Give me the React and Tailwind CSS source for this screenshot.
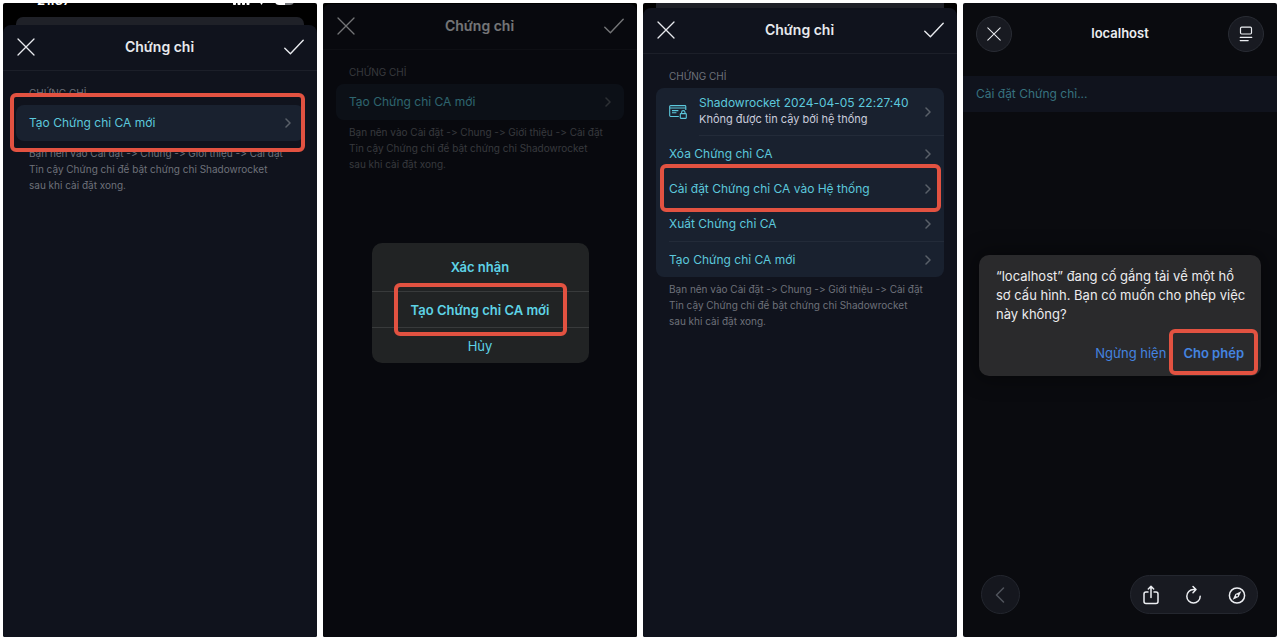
import React from "react";

const NOTE = [
  "Bạn nên vào Cài đặt -> Chung -> Giới thiệu -> Cài đặt",
  "Tin cậy Chứng chỉ để bật chứng chỉ Shadowrocket",
  "sau khi cài đặt xong.",
];

function Panel({ className = "", children }) {
  return (
    <section className={`relative flex min-w-0 flex-col overflow-hidden rounded-[2px] ${className}`}>
      {children}
    </section>
  );
}

function Highlight({ className }) {
  return (
    <span
      aria-hidden="true"
      className={`pointer-events-none absolute rounded-[6px] border-4 border-[#e25241] ${className}`}
    />
  );
}

function CloseIcon({ className = "size-[18px]" }) {
  return (
    <svg viewBox="0 0 18 18" className={className} fill="none" stroke="currentColor" strokeWidth="1.3" strokeLinecap="round">
      <path d="M1 1l16 16M17 1L1 17" />
    </svg>
  );
}

function CheckIcon() {
  return (
    <svg viewBox="0 0 20 16" className="h-4 w-5" fill="none" stroke="currentColor" strokeWidth="1.4" strokeLinecap="round" strokeLinejoin="round">
      <path d="M0.8 9.2l5.6 5.6L19.2 1.2" />
    </svg>
  );
}

function Chevron() {
  return (
    <svg viewBox="0 0 6 10" className="h-[10px] w-[6px] shrink-0 text-[#5a6069]" fill="none" stroke="currentColor" strokeWidth="1.5" strokeLinecap="round" strokeLinejoin="round">
      <path d="M1 1l4 4-4 4" />
    </svg>
  );
}

function CertificateIcon() {
  return (
    <svg viewBox="0 0 18 14" className="h-[14px] w-[18px] shrink-0" fill="none" stroke="currentColor" strokeWidth="1.1">
      <path d="M9.8 11.5H1.6a.9.9 0 0 1-.9-.9V1.5a.9.9 0 0 1 .9-.9h14.3a.9.9 0 0 1 .9.9v3.6" />
      <path d="M.7 3h16.1M3 5.600h6.400M3 7.700h4.400" />
      <rect x="11.3" y="8.6" width="6" height="4.8" rx=".6" />
      <path d="M12.6 8.6V7.3a1.7 1.7 0 0 1 3.4 0v1.3" />
    </svg>
  );
}

function SheetHeader() {
  return (
    <header className="flex h-[46px] items-center justify-between border-b border-[#1c1f29] pb-[2px] pl-[14px] pr-[13px] text-[#e8eaee]">
      <button aria-label="Đóng"><CloseIcon /></button>
      <h2 className="text-[14px] font-semibold leading-5">Chứng chỉ</h2>
      <button aria-label="Xong"><CheckIcon /></button>
    </header>
  );
}

function Row({ children, className = "" }) {
  return (
    <button className={`flex w-full items-center justify-between px-[13px] text-left text-[12px] leading-4 text-[#5cc8dc] ${className}`}>
      <span className="whitespace-nowrap">{children}</span>
      <Chevron />
    </button>
  );
}

function Sheet({ children }) {
  return (
    <div className="flex flex-1 flex-col rounded-t-[8px] bg-[#10131d]">
      <SheetHeader />
      <div className="px-[13px] pt-[14px]">
        <h3 className="mb-1 px-[13px] text-[10px] leading-4 text-[#6e717a]">CHỨNG CHỈ</h3>
        <div className="relative">{children}</div>
        <p className="mt-1 whitespace-nowrap px-[13px] text-[10px] leading-4 text-[#6e717a]">
          {NOTE.map((line) => (
            <span key={line} className="block">{line}</span>
          ))}
        </p>
      </div>
    </div>
  );
}

function CreateRow() {
  return <Row className="h-9 rounded-[8px] bg-[#19212f]">Tạo Chứng chỉ CA mới</Row>;
}

function StatusBar() {
  return (
    <div className="flex h-[5px] items-end justify-between overflow-hidden pl-[34px] pr-[22px] text-white">
      <span className="shrink-0 text-[13px] font-semibold leading-4">21:37</span>
      <svg viewBox="0 0 64 6" className="h-[6px] w-16 shrink-0" fill="currentColor">
        <rect x="2" y="-2" width="3" height="5" rx=".8" />
        <rect x="6.5" y="-3" width="3" height="6" rx=".8" />
        <rect x="11" y="-4" width="3" height="7" rx=".8" />
        <rect x="15.5" y="-5" width="3" height="8" rx=".8" />
        <path d="M28 -1h5l-2.5 4z" />
        <path d="M44 -4h10v7h-6a4 4 0 0 1-4-4z" />
        <path d="M54 -4h9v3a4 4 0 0 1-4 4h-5z" fill="#77797d" />
      </svg>
    </div>
  );
}

function FirstPanel() {
  return (
    <Panel className="bg-black">
      <StatusBar />
      <div className="mx-[13px] mt-[9px] h-2 rounded-t-[7px] bg-[#1f2128]" />
      <Sheet>
        <CreateRow />
        <Highlight className="-bottom-[11px] -left-[6px] -right-px -top-[12px]" />
      </Sheet>
    </Panel>
  );
}

function SecondPanel() {
  return (
    <Panel className="bg-black pt-px">
      <Sheet><CreateRow /></Sheet>
      <div className="absolute inset-0 flex items-start justify-center bg-black/50 pt-[240px]">
        <div role="dialog" aria-label="Xác nhận" className="w-[217px] divide-y divide-[#383a3b] rounded-[10px] bg-[#212324] text-center text-[13px] leading-4 text-[#5ed3e6]">
          <h3 className="py-4 text-[13px] font-semibold">Xác nhận</h3>
          <div className="relative">
            <button className="h-[35px] w-full font-semibold">Tạo Chứng chỉ CA mới</button>
            <Highlight className="inset-x-[22px] -bottom-[9px] -top-[9px]" />
          </div>
          <button className="h-[35px] w-full">Hủy</button>
        </div>
      </div>
    </Panel>
  );
}

function ThirdPanel() {
  return (
    <Panel className="bg-black">
      <div className="mx-[13px] h-[5px] bg-[#1f2128]" />
      <Sheet>
        <div className="rounded-[8px] bg-[#19212f]">
          <button className="flex h-12 w-full items-center px-[13px] text-left text-[#5cc8dc]">
            <CertificateIcon />
            <span className="ml-3 flex-1 whitespace-nowrap pb-[2px]">
              <span className="block text-[12px] leading-4">Shadowrocket 2024-04-05 22:27:40</span>
              <span className="block text-[11px] leading-4 text-[#c9ccdc]">Không được tin cậy bởi hệ thống</span>
            </span>
            <Chevron />
          </button>
          <hr className="-mt-px ml-[43px] border-[#232b39]" />
          <Row className="h-[35px]">Xóa Chứng chỉ CA</Row>
          <div className="relative">
            <Row className="h-[35px]">Cài đặt Chứng chỉ CA vào Hệ thống</Row>
            <Highlight className="-bottom-[6px] -top-[7px] left-1 right-[3px]" />
          </div>
          <Row className="h-9">Xuất Chứng chỉ CA</Row>
          <hr className="-mt-px ml-[13px] border-[#232b39]" />
          <Row className="h-[35px]">Tạo Chứng chỉ CA mới</Row>
        </div>
      </Sheet>
    </Panel>
  );
}

function FourthPanel() {
  return (
    <Panel className="bg-[#0a0b0f]">
      <header className="flex h-[73px] items-start justify-between px-[13px] pt-[13px] text-[#eceef2]">
        <button aria-label="Đóng" className="flex size-9 items-center justify-center rounded-full border border-[#292c34] bg-[#181a21]">
          <CloseIcon className="size-[14px]" />
        </button>
        <h2 className="mt-[7px] text-[13px] font-semibold leading-5">localhost</h2>
        <button aria-label="Định dạng trang" className="flex size-9 items-center justify-center rounded-full border border-[#292c34] bg-[#181a21]">
          <svg viewBox="0 0 14 16" className="h-4 w-[14px]" fill="none" stroke="currentColor" strokeWidth="1.2" strokeLinecap="round">
            <rect x="1.500" y="1.200" width="11" height="6.800" rx="1.200" />
            <path d="M1.200 11.300h11.600M1.200 14.600h8" />
          </svg>
        </button>
      </header>
      <p className="flex h-9 items-center bg-[#10131d] px-[13px] text-[12px] leading-4 text-[#37727f]">Cài đặt Chứng chỉ...</p>
      <footer className="mt-auto flex items-center justify-between pb-[23px] pl-[18px] pr-[19px] text-[#eceef2]">
        <button aria-label="Quay lại" className="flex size-[39px] items-center justify-center rounded-full border border-[#24272f] bg-[#15171e] pr-[2px] text-[#50545c]">
          <svg viewBox="0 0 10 16" className="h-4 w-[10px]" fill="none" stroke="currentColor" strokeWidth="1.500" strokeLinecap="round" strokeLinejoin="round">
            <path d="M8.500 1L1.500 8l7 7" />
          </svg>
        </button>
        <div className="flex h-[39px] w-32 items-center justify-between rounded-full border border-[#24272f] bg-[#181a21] px-[11px]">
          <button aria-label="Chia sẻ">
            <svg viewBox="0 0 18 20" className="h-5 w-[18px]" fill="none" stroke="currentColor" strokeWidth="1.500" strokeLinecap="round" strokeLinejoin="round">
              <path d="M6 7H4a2 2 0 0 0-2 2v7.500a2 2 0 0 0 2 2h10a2 2 0 0 0 2-2V9a2 2 0 0 0-2-2h-2M9 12.500V1.500M6.300 4L9 1.300 11.700 4" />
            </svg>
          </button>
          <button aria-label="Tải lại">
            <svg viewBox="0 0 18 20" className="h-5 w-[18px]" fill="none" stroke="currentColor" strokeWidth="1.500" strokeLinecap="round" strokeLinejoin="round">
              <path d="M10.500 4.600H8.500a6.700 6.700 0 1 0 6.700 6.700M8 1.500l3 3.100-3 3.100" />
            </svg>
          </button>
          <button aria-label="Mở bằng trình duyệt">
            <svg viewBox="0 0 18 20" className="h-5 w-[18px]" fill="none" stroke="currentColor" strokeWidth="1.500" strokeLinejoin="round">
              <circle cx="9" cy="10.500" r="7.600" />
              <path d="M13.300 6.200l-2.700 5.900-5.900 2.700 2.700-5.900z" fill="currentColor" stroke="none" />
              <circle cx="9" cy="10.500" r="1" fill="#181a21" stroke="none" />
            </svg>
          </button>
        </div>
      </footer>
      <div className="absolute inset-0 flex items-start px-4 pt-[252px]">
        <div role="dialog" aria-label="localhost" className="w-full rounded-[10px] bg-[#2a2a2c] pb-[15px] pl-[17px] pr-[17px] pt-3 shadow-[0_0_20px_4px_rgba(0,0,0,0.35)]">
          <p className="whitespace-nowrap text-[13px] leading-[19px] text-[#ececee]">
            <span className="block">“localhost” đang cố gắng tải về một hồ</span>
            <span className="block">sơ cấu hình. Bạn có muốn cho phép việc</span>
            <span className="block">này không?</span>
          </p>
          <div className="mt-[21px] flex justify-end gap-[17px] text-[13px] leading-4 text-[#4484e0]">
            <button>Ngừng hiện</button>
            <div className="relative">
              <button className="font-semibold">Cho phép</button>
              <Highlight className="-inset-x-[14px] -bottom-[14px] -top-4" />
            </div>
          </div>
        </div>
      </div>
    </Panel>
  );
}

export default function App() {
  return (
    <main className="grid min-h-screen grid-cols-4 gap-[6px] bg-white p-[3px] font-['Inter','Noto_Sans',sans-serif] [font-variant-ligatures:no-contextual]">
      <FirstPanel />
      <SecondPanel />
      <ThirdPanel />
      <FourthPanel />
    </main>
  );
}
